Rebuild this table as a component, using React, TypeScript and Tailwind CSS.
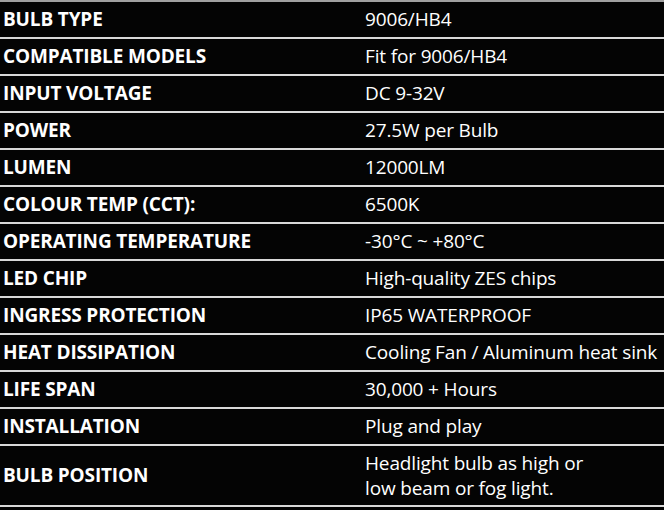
const specs: { label: string; value: string[] }[] = [
  { label: "BULB TYPE", value: ["9006/HB4"] },
  { label: "COMPATIBLE MODELS", value: ["Fit for 9006/HB4"] },
  { label: "INPUT VOLTAGE", value: ["DC 9-32V"] },
  { label: "POWER", value: ["27.5W per Bulb"] },
  { label: "LUMEN", value: ["12000LM"] },
  { label: "COLOUR TEMP (CCT):", value: ["6500K"] },
  { label: "OPERATING TEMPERATURE", value: ["-30°C ~ +80°C"] },
  { label: "LED CHIP", value: ["High-quality ZES chips"] },
  { label: "INGRESS PROTECTION", value: ["IP65 WATERPROOF"] },
  { label: "HEAT DISSIPATION", value: ["Cooling Fan / Aluminum heat sink"] },
  { label: "LIFE SPAN", value: ["30,000 + Hours"] },
  { label: "INSTALLATION", value: ["Plug and play"] },
  { label: "BULB POSITION", value: ["Headlight bulb as high or", "low beam or fog light."] },
];

export default function App() {
  return (
    <div className="w-[664px] h-[510px] bg-[#040404] text-white overflow-hidden font-['Open_Sans','Noto_Sans',sans-serif]">
      <div className="border-t-2 border-[#a0a0a0]">
        {specs.map((row, i) => (
          <div
            key={row.label}
            className={`flex items-center border-b-2 border-[#d8d8d8] ${
              i === specs.length - 1 ? "h-[61px]" : "h-[37px]"
            }`}
          >
            <div className="w-[365px] pl-[3px] text-[19px] font-bold tracking-[-0.15px]">{row.label}</div>
            <div className="flex-1 text-[19px] leading-[25px] tracking-[-0.15px] whitespace-nowrap">
              {row.value.map((v) => (
                <div key={v}>{v}</div>
              ))}
            </div>
          </div>
        ))}
      </div>
    </div>
  );
}
